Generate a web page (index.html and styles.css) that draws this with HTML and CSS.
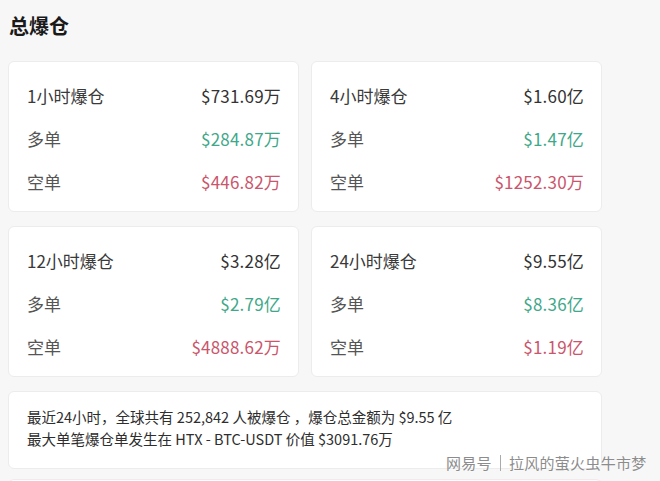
FILE: index.html
```html
<!DOCTYPE html>
<html lang="zh">
<head>
<meta charset="utf-8">
<link rel="stylesheet" href="styles.css">
</head>
<body>
<div class="page">
  <h1 class="title">总爆仓</h1>
  <div class="grid">
    <div class="card">
      <div class="row"><span class="label main">1小时爆仓</span><span class="val">$731.69万</span></div>
      <div class="row"><span class="label">多单</span><span class="val up">$284.87万</span></div>
      <div class="row"><span class="label">空单</span><span class="val down">$446.82万</span></div>
    </div>
    <div class="card">
      <div class="row"><span class="label main">4小时爆仓</span><span class="val">$1.60亿</span></div>
      <div class="row"><span class="label">多单</span><span class="val up">$1.47亿</span></div>
      <div class="row"><span class="label">空单</span><span class="val down">$1252.30万</span></div>
    </div>
    <div class="card">
      <div class="row"><span class="label main">12小时爆仓</span><span class="val">$3.28亿</span></div>
      <div class="row"><span class="label">多单</span><span class="val up">$2.79亿</span></div>
      <div class="row"><span class="label">空单</span><span class="val down">$4888.62万</span></div>
    </div>
    <div class="card">
      <div class="row"><span class="label main">24小时爆仓</span><span class="val">$9.55亿</span></div>
      <div class="row"><span class="label">多单</span><span class="val up">$8.36亿</span></div>
      <div class="row"><span class="label">空单</span><span class="val down">$1.19亿</span></div>
    </div>
  </div>
  <div class="summary">
    <p>最近24小时，全球共有 252,842 人被爆仓 ，爆仓总金额为 $9.55 亿</p>
    <p>最大单笔爆仓单发生在 HTX - BTC-USDT 价值 $3091.76万</p>
  </div>
  <div class="next"></div>
</div>
<div class="watermark">网易号<span class="sep"></span>拉风的萤火虫牛市梦</div>
</body>
</html>
```
FILE: styles.css
```css
html, body {
  margin: 0;
  padding: 0;
  background: #f7f7f7;
  font-family: "Noto Sans CJK SC", "Noto Sans", sans-serif;
  overflow: hidden;
  height: 481px;
}
.page {
  padding: 0 58px 0 8px;
  width: 594px;
  height: 481px;
  overflow: hidden;
}
.title {
  margin: 0;
  padding: 12px 0 0 1px;
  height: 48px;
  box-sizing: border-box;
  font-size: 20px;
  line-height: 28px;
  font-weight: 700;
  color: #1a1a1a;
}
.grid {
  margin-top: 13px;
  display: grid;
  grid-template-columns: 1fr 1fr;
  column-gap: 12px;
  row-gap: 14px;
}
.card {
  background: #fff;
  border: 1px solid #ececec;
  border-radius: 6px;
  box-sizing: border-box;
  height: 151px;
  padding: 22px 17px 0 18px;
  display: flex;
  flex-direction: column;
  gap: 19px;
}
.row {
  display: flex;
  justify-content: space-between;
  align-items: center;
  height: 24px;
  font-size: 17px;
  line-height: 24px;
}
.label {
  color: #555;
}
.label.main {
  color: #3a3a3a;
}
.val {
  color: #333;
  letter-spacing: 0.2px;
}
.val.up {
  color: #3fa88a;
}
.val.down {
  color: #c9566c;
}
.summary {
  margin-top: 14px;
  background: #fff;
  border: 1px solid #ececec;
  border-radius: 6px;
  box-sizing: border-box;
  height: 78px;
  padding: 14px 18px 0 18px;
}
.summary p {
  margin: 0;
  font-size: 14.5px;
  line-height: 22px;
  color: #2e2e2e;
  white-space: nowrap;
}
.next {
  margin-top: 10px;
  background: #fff;
  border: 1px solid #ececec;
  border-bottom: 0;
  border-radius: 6px 6px 0 0;
  height: 10px;
}
.watermark {
  position: absolute;
  left: 446px;
  top: 451px;
  font-size: 15px;
  line-height: 24px;
  color: #8c8c8c;
  white-space: nowrap;
  letter-spacing: 0.3px;
  text-shadow: 0 0 2px #fff;
  display: flex;
  align-items: center;
}
.watermark .sep {
  display: inline-block;
  width: 1px;
  height: 16px;
  background: #aaa;
  margin: 0 8px;
}
```
